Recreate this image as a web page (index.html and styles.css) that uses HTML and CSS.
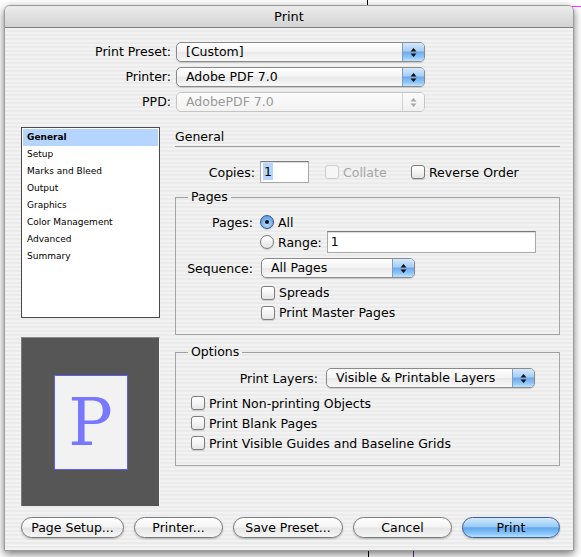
FILE: index.html
```html
<!DOCTYPE html>
<html>
<head>
<meta charset="utf-8">
<title>Print</title>
<link rel="stylesheet" href="styles.css">
</head>
<body>
<div class="desk">
  <div class="desk-line top-black"></div>
  <div class="desk-line bottom-black"></div>
  <div class="desk-line bottom-purple"></div>
  <div class="desk-line top-magenta"></div>
</div>
<div class="window">
  <div class="titlebar">Print</div>
  <div class="body">
    <div class="presets">
      <div class="plabel">Print Preset:</div>
      <div class="popup"><span class="ptext">[Custom]</span><span class="parrows"><svg width="7" height="11" viewBox="0 0 7 11"><polygon points="3.5,1 6.5,4.5 0.5,4.5"/><polygon points="0.5,6.5 6.5,6.5 3.5,10"/></svg></span></div>
      <div class="plabel">Printer:</div>
      <div class="popup"><span class="ptext">Adobe PDF 7.0</span><span class="parrows"><svg width="7" height="11" viewBox="0 0 7 11"><polygon points="3.5,1 6.5,4.5 0.5,4.5"/><polygon points="0.5,6.5 6.5,6.5 3.5,10"/></svg></span></div>
      <div class="plabel">PPD:</div>
      <div class="popup disabled"><span class="ptext">AdobePDF 7.0</span><span class="parrows"><svg width="7" height="11" viewBox="0 0 7 11"><polygon points="3.5,1 6.5,4.5 0.5,4.5"/><polygon points="0.5,6.5 6.5,6.5 3.5,10"/></svg></span></div>
    </div>

    <div class="main">
      <div class="left">
        <ul class="list">
          <li class="sel">General</li>
          <li>Setup</li>
          <li>Marks and Bleed</li>
          <li>Output</li>
          <li>Graphics</li>
          <li>Color Management</li>
          <li>Advanced</li>
          <li>Summary</li>
        </ul>
        <div class="preview">
          <div class="page"><span class="bigp">P</span></div>
        </div>
      </div>

      <div class="right">
        <div class="heading">General</div>
        <div class="copies-row">
          <div class="clabel">Copies:</div>
          <div class="textfield copies"><span class="hl">1</span></div>
          <div class="check collate disabled"><span class="box"></span><span>Collate</span></div>
          <div class="check"><span class="box"></span><span>Reverse Order</span></div>
        </div>

        <fieldset class="group pages">
          <legend>Pages</legend>
          <div class="frow r1">
            <div class="flabel">Pages:</div>
            <div class="radio on"><span class="dot"></span></div>
            <span class="rtext">All</span>
          </div>
          <div class="frow r2">
            <div class="flabel"></div>
            <div class="radio"></div>
            <span class="rtext">Range:</span>
            <div class="textfield range">1</div>
          </div>
          <div class="frow r3">
            <div class="flabel">Sequence:</div>
            <div class="popup seq"><span class="ptext">All Pages</span><span class="parrows"><svg width="7" height="11" viewBox="0 0 7 11"><polygon points="3.5,1 6.5,4.5 0.5,4.5"/><polygon points="0.5,6.5 6.5,6.5 3.5,10"/></svg></span></div>
          </div>
          <div class="frow r4">
            <div class="flabel"></div>
            <div class="check"><span class="box"></span><span>Spreads</span></div>
          </div>
          <div class="frow r5">
            <div class="flabel"></div>
            <div class="check"><span class="box"></span><span>Print Master Pages</span></div>
          </div>
        </fieldset>

        <fieldset class="group options">
          <legend>Options</legend>
          <div class="orow layers">
            <div class="olabel">Print Layers:</div>
            <div class="popup lay"><span class="ptext">Visible &amp; Printable Layers</span><span class="parrows"><svg width="7" height="11" viewBox="0 0 7 11"><polygon points="3.5,1 6.5,4.5 0.5,4.5"/><polygon points="0.5,6.5 6.5,6.5 3.5,10"/></svg></span></div>
          </div>
          <div class="orow cb"><div class="check"><span class="box"></span><span>Print Non-printing Objects</span></div></div>
          <div class="orow cb"><div class="check"><span class="box"></span><span>Print Blank Pages</span></div></div>
          <div class="orow cb"><div class="check"><span class="box"></span><span>Print Visible Guides and Baseline Grids</span></div></div>
        </fieldset>
      </div>
    </div>

    <div class="buttons">
      <div class="btn b1">Page Setup...</div>
      <div class="btn b2">Printer...</div>
      <div class="btn b3">Save Preset...</div>
      <div class="btn b4">Cancel</div>
      <div class="btn b5 default">Print</div>
    </div>
  </div>
</div>
</body>
</html>
```

FILE: styles.css
```css
html, body {
  margin: 0;
  padding: 0;
  background: #ffffff;
}
body {
  width: 581px;
  height: 557px;
  overflow: hidden;
  font-family: "DejaVu Sans", "Noto Sans", sans-serif;
  font-size: 12.5px;
  color: #000;
  padding-top: 5px;
  box-sizing: border-box;
  position: relative;
}

/* things on the desktop behind the window */
.desk { position: absolute; inset: 0; z-index: 0; }
.desk-line { position: absolute; }
.top-black { left: 367px; top: 0; width: 1px; height: 8px; background: #000; }
.bottom-black { left: 368px; top: 548px; width: 1px; height: 9px; background: #000; }
.bottom-purple { left: 413px; top: 548px; width: 1px; height: 9px; background: #5a2a8a; }
.top-magenta { left: 572px; top: 6px; width: 9px; height: 1px; background: #ff33ff; }

.window {
  position: relative;
  z-index: 1;
  margin-left: 4px;
  width: 570px;
  border: 1px solid #9a9a9a;
  border-radius: 6px 6px 0 0;
  box-sizing: border-box;
  box-shadow: 0 3px 9px rgba(0, 0, 0, 0.55);
  background: #eeeeee;
  overflow: hidden;
}

.titlebar {
  height: 21px;
  line-height: 21px;
  text-align: center;
  font-size: 13px;
  background: linear-gradient(#ececec, #d3d3d3);
  border-bottom: 1px solid #7d7d7d;
}

.body {
  height: 522px;
  box-sizing: border-box;
  padding: 14px 0 13px 15px;
  background: repeating-linear-gradient(#f2f2f2 0px, #f2f2f2 2px, #ebebeb 2px, #ebebeb 4px);
}

/* top popups */
.presets {
  display: grid;
  grid-template-columns: 151px 249px;
  grid-auto-rows: 20px;
  row-gap: 5px;
  column-gap: 5px;
}
.plabel {
  text-align: right;
  line-height: 20px;
}

.popup {
  display: flex;
  height: 20px;
  box-sizing: border-box;
  border: 1px solid #8a8a8a;
  border-radius: 5px;
  background: linear-gradient(#ffffff, #f3f3f3 50%, #e9e9e9 51%, #f8f8f8);
  box-shadow: 0 1px 1px rgba(0, 0, 0, 0.15);
  overflow: hidden;
}
.ptext {
  flex: 1;
  padding-left: 9px;
  line-height: 18px;
  white-space: nowrap;
}
.parrows {
  width: 21px;
  display: flex;
  align-items: center;
  justify-content: center;
  background: linear-gradient(#d6eafc 0%, #a5cdf4 45%, #6fa9eb 50%, #8ec6f6 80%, #c2e4fd 100%);
  border-left: 1px solid #7d9cc6;
}
.parrows svg { fill: #111; display: block; }
.popup.disabled { border-color: #c4c4c4; box-shadow: none; background: linear-gradient(#fbfbfb, #f2f2f2); }
.popup.disabled .ptext { color: #9a9a9a; }
.popup.disabled .parrows { background: linear-gradient(#fbfbfb, #f0f0f0); border-left-color: #d2d2d2; }
.popup.disabled .parrows svg { fill: #a8a8a8; }

/* main area */
.main {
  display: flex;
  gap: 15px;
  margin-top: 15px;
  padding-left: 1px;
}
.left {
  width: 139px;
  display: flex;
  flex-direction: column;
  gap: 19px;
}
.list {
  list-style: none;
  margin: 0;
  padding: 1px 1px;
  height: 191px;
  box-sizing: border-box;
  background: #fff;
  border: 1px solid #4a4a4a;
  font-size: 9px;
}
.list li {
  height: 17px;
  line-height: 17px;
  padding-left: 4px;
}
.list li.sel {
  background: #b5d5ff;
  font-weight: bold;
}

.preview {
  height: 169px;
  box-sizing: border-box;
  background: #565656;
  border-top: 1px solid #8a8a8a;
  border-left: 1px solid #7a7a7a;
  border-right: 1px solid #f5f5f5;
  display: flex;
  align-items: center;
  justify-content: center;
}
.page {
  width: 74px;
  height: 95px;
  box-sizing: border-box;
  background: #f2f2f2;
  border: 1px solid #5c5cf0;
  display: flex;
  align-items: center;
  justify-content: center;
}
.bigp {
  font-family: "DejaVu Serif", "Liberation Serif", serif;
  font-size: 66px;
  line-height: 66px;
  color: #7878ff;
  padding-top: 2px;
}

.right {
  width: 385px;
  display: flex;
  flex-direction: column;
}
.heading {
  height: 19px;
  line-height: 19px;
  border-bottom: 1px solid #9b9b9b;
  font-size: 12.5px;
}
.copies-row {
  display: flex;
  align-items: center;
  margin-top: 14px;
  height: 22px;
}
.clabel {
  width: 80px;
  text-align: right;
  margin-right: 5px;
}
.textfield {
  height: 22px;
  box-sizing: border-box;
  background: #fff;
  border: 1px solid #a9a9a9;
  border-top-color: #7a7a7a;
  box-shadow: inset 0 1px 1px rgba(0, 0, 0, 0.15);
  line-height: 20px;
  padding-left: 2px;
}
.textfield.copies { width: 49px; margin-right: 16px; }
.hl { background: #b5d5ff; padding: 1px 1px; }
.textfield.range { width: 209px; margin-left: 5px; padding-left: 3px; }

.check {
  display: flex;
  align-items: center;
  white-space: nowrap;
}
.box {
  width: 14px;
  height: 14px;
  box-sizing: border-box;
  border: 1px solid #7c7c7c;
  border-radius: 3px;
  background: linear-gradient(#ffffff, #f4f4f4 50%, #e4e4e4 100%);
  box-shadow: 0 1px 1px rgba(0, 0, 0, 0.15);
  margin-right: 4px;
  flex: none;
}
.check.collate { width: 86px; }
.check.disabled { color: #a6a6a6; }
.check.disabled .box { border-color: #cdcdcd; box-shadow: none; background: #f6f6f6; }

/* group boxes */
fieldset.group {
  margin: 0;
  padding: 0;
  min-width: 0;
  border: 1px solid #a4a4a4;
  border-top-color: #a0a0a0;
}
fieldset.group legend {
  margin-left: 12px;
  padding: 0 3px;
  height: 14px;
  line-height: 14px;
}
fieldset.pages { margin-top: 7px; padding-bottom: 14px; }
fieldset.options { margin-top: 10px; padding-bottom: 12px; }

.frow { display: flex; align-items: center; }
.flabel { width: 77px; text-align: right; margin-right: 7px; flex: none; }
.r1 { margin-top: 10px; height: 16px; }
.r2 { margin-top: 1px; height: 22px; }
.r3 { margin-top: 5px; height: 20px; }
.r4 { margin-top: 7px; height: 15px; padding-left: 1px; }
.r5 { margin-top: 5px; height: 15px; padding-left: 1px; }

.radio {
  width: 14px;
  height: 14px;
  box-sizing: border-box;
  border-radius: 50%;
  border: 1px solid #7c7c7c;
  background: linear-gradient(#ffffff, #f2f2f2 50%, #e2e2e2);
  box-shadow: 0 1px 1px rgba(0, 0, 0, 0.15);
  display: flex;
  align-items: center;
  justify-content: center;
  margin-right: 4px;
  flex: none;
}
.radio.on {
  border-color: #34558c;
  background: radial-gradient(circle at 50% 70%, #bfe3ff 0%, #7fb6f0 45%, #4d8fe0 100%);
}
.radio .dot {
  width: 4px;
  height: 4px;
  border-radius: 50%;
  background: #111;
}
.popup.seq { width: 154px; margin-left: 1px; }

.orow { display: flex; align-items: center; }
.orow.layers { margin-top: 9px; height: 20px; }
.olabel { width: 142px; text-align: right; margin-right: 8px; flex: none; }
.popup.lay { width: 209px; }
.orow.cb { height: 20px; padding-left: 15px; }
.orow.layers + .orow.cb { margin-top: 5px; }

/* buttons */
.buttons {
  display: flex;
  gap: 10px;
  margin-top: 11px;
  padding-left: 1px;
}
.btn {
  height: 21px;
  box-sizing: border-box;
  border: 1px solid #7b7b7b;
  border-radius: 11px;
  background: linear-gradient(#ffffff 0%, #f4f4f4 45%, #e6e6e6 55%, #f6f6f6 100%);
  box-shadow: 0 1px 2px rgba(0, 0, 0, 0.25);
  text-align: center;
  line-height: 19px;
  white-space: nowrap;
}
.b1 { width: 103px; }
.b2 { width: 89px; }
.b3 { width: 110px; }
.b4 { width: 99px; }
.b5 { width: 98px; }
.btn.default {
  border-color: #3b5f9e;
  background: linear-gradient(#d3e9fc 0%, #9acbf6 45%, #62a6ef 52%, #86c4f8 80%, #b9e2fe 100%);
}
```
